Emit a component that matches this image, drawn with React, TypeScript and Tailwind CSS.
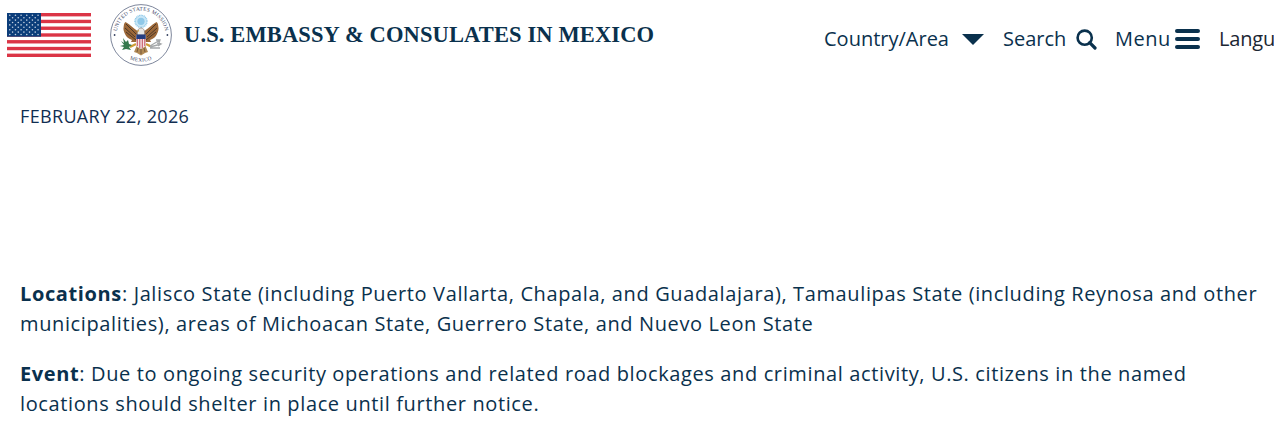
const stripes = [0, 2, 4, 6, 8, 10, 12];
const starRows = [0, 1, 2, 3, 4, 5, 6, 7, 8];

const Flag = () => (
  <svg viewBox="0 0 84 44" className="h-11 w-[84px] shrink-0" aria-label="U.S. flag">
    <rect width="84" height="44" fill="#fff" />
    {stripes.map((i) => (
      <rect key={i} y={i * 3.385} width="84" height="3.385" fill="#db3546" />
    ))}
    <rect width="34" height="23.7" fill="#0b3d7a" />
    {starRows.map((row) =>
      Array.from({ length: row % 2 ? 5 : 6 }, (_, col) => (
        <circle
          key={`${row}-${col}`}
          cx={(row % 2 ? 5.6 : 2.8) + col * 5.65}
          cy={2.3 + row * 2.4}
          r="0.8"
          fill="#c3d0e0"
        />
      ))
    )}
  </svg>
);

const Seal = () => (
  <svg viewBox="0 0 62 62" className="size-[62px] shrink-0" aria-label="United States Mission Mexico">
    <defs>
      <path id="sealTop" d="M7.5 37.5A24.4 24.4 0 1 1 54.5 37.5" />
      <path id="sealBottom" d="M12 49.8A26.8 26.8 0 0 0 50 49.8" />
    </defs>
    <circle cx="31" cy="31" r="30.4" fill="#fff" stroke="#6e7890" strokeWidth="0.9" />
    <g fill="#35405f" fontFamily="Liberation Serif, serif" fontSize="5.3" textAnchor="middle">
      <text letterSpacing="0.3">
        <textPath href="#sealTop" startOffset="50%">UNITED STATES MISSION</textPath>
      </text>
      <text letterSpacing="0.35">
        <textPath href="#sealBottom" startOffset="50%">MEXICO</textPath>
      </text>
    </g>
    <circle cx="4.6" cy="31" r="0.9" fill="#35405f" />
    <circle cx="57.4" cy="31" r="0.9" fill="#35405f" />
    {/* glory above the eagle */}
    <circle cx="31" cy="17.3" r="6" fill="#c9e6f6" stroke="#8fc9e9" strokeWidth="1.4" strokeDasharray="1 0.6" />
    <circle cx="31" cy="17.3" r="3.6" fill="#8fc8e8" />
    {/* wings */}
    <path
      d="M28 27C25 26 21 21 15.5 18C13.8 19 14 21 13.6 23C13 25 14 28 15 30C16 33 19 35 22 36L21 38L26 38L29 36Z"
      fill="#9b6738"
    />
    <path
      d="M34 27C37 26 41 21 46.5 18C48.2 19 48 21 48.4 23C49 25 48 28 47 30C46 33 43 35 40 36L41 38L36 38L33 36Z"
      fill="#9b6738"
    />
    <path
      d="M16 20L26 30M15 24L25 33M16 28L26 36M46 20L36 30M47 24L37 33M46 28L36 36"
      stroke="#4c3829"
      strokeWidth="1"
      fill="none"
    />
    {/* tail and legs */}
    <path d="M27 41L24 48L27 49L31 51.5L35 49L38 48L35 41Z" fill="#b28a55" />
    <path d="M28 44L27 48M31 44V50M34 44L35 48" stroke="#5d4330" strokeWidth="0.7" />
    <path d="M26 40L20 43M36 40L42 43" stroke="#ce9d35" strokeWidth="2.2" />
    <path d="M27.5 31C27 27 28 24 31 24C34 24 35 27 34.5 31Z" fill="#e8e6e3" stroke="#7d7169" strokeWidth="0.6" />
    <path d="M28.8 26L26.5 27.3L29 27.6Z" fill="#d69b28" />
    {/* olive branch */}
    <path d="M11 37L14 39L13 34L16 38L18 36L19 40L22 41L19 43L21 46L16 45L12 46L14 43L10 42L14 41Z" fill="#34794c" />
    {/* arrows */}
    <path
      d="M40 42L50 36M40 43L51 40M40 44L50 44M46 36L50 36L49 39M47 39L51 40L48 42"
      stroke="#a5a8aa"
      strokeWidth="1.3"
      fill="none"
    />
    {/* shield */}
    <path d="M26.3 31H35.7V40C35.7 43 33 44 31 45C29 44 26.3 43 26.3 40Z" fill="#f3e7e9" />
    <path d="M27.3 35V42M29.8 35V44M32.3 35V44M34.8 35V42" stroke="#c85566" strokeWidth="1.1" />
    <path d="M26.3 30.5H35.7V35H26.3Z" fill="#243d80" />
  </svg>
);

const App = () => {
  return (
    <div className="min-h-[436px] w-full overflow-hidden bg-white font-['Open_Sans',sans-serif] text-[#0a314d]">
      <header className="flex h-[78px] items-start pl-[7px]">
        <div className="pt-[13px]">
          <Flag />
        </div>
        <div className="ml-[19px] pt-1">
          <Seal />
        </div>
        <h1 className="ml-3 w-[640px] shrink-0 pt-[19px] font-['Liberation_Serif',serif] text-[22.5px] leading-[32px] font-bold tracking-[0.13px] whitespace-nowrap">
          U.S. EMBASSY &amp; CONSULATES IN MEXICO
        </h1>
        <nav className="flex h-[78px] shrink-0 items-center text-[20px] whitespace-nowrap">
          <div className="flex w-[179px] items-center">
            <span className="w-[138px]">Country/Area</span>
            <svg viewBox="0 0 22 11" className="h-[11px] w-[22px]">
              <path d="M0 0H22L11 11Z" fill="currentColor" />
            </svg>
          </div>
          <div className="flex w-28 items-center">
            <span className="w-[73px]">Search</span>
            <svg viewBox="0 0 21 21" className="size-[21px]" fill="none" stroke="currentColor">
              <circle cx="8.7" cy="8.7" r="7.1" strokeWidth="2.6" />
              <path d="M13.7 13.7L19 19" strokeWidth="3.2" strokeLinecap="round" />
            </svg>
          </div>
          <div className="flex w-[104px] items-center">
            <span className="w-[60px] tracking-[0.5px]">Menu</span>
            <span className="flex w-[25px] flex-col gap-1">
              <span className="h-1 rounded-full bg-current" />
              <span className="h-1 rounded-full bg-current" />
              <span className="h-1 rounded-full bg-current" />
            </span>
          </div>
          <span className="tracking-[-0.2px] text-[#1b2733]">Langu</span>
        </nav>
      </header>

      <main className="px-5">
        <p className="pt-[25px] text-[18px] leading-[27px] tracking-[0.34px] text-[#112e51]">FEBRUARY 22, 2026</p>
        <div className="mt-[149px] text-[20px] leading-[30px] tracking-[0.625px] whitespace-nowrap">
          <p>
            <strong>Locations</strong>: Jalisco State (including Puerto Vallarta, Chapala, and Guadalajara), Tamaulipas
            State (including Reynosa and other
            <br />
            municipalities), areas of Michoacan State, Guerrero State, and Nuevo Leon State
          </p>
          <p className="mt-5">
            <strong>Event</strong>: Due to ongoing security operations and related road blockages and criminal activity,
            U.S. citizens in the named
            <br />
            locations should shelter in place until further notice.
          </p>
        </div>
      </main>
    </div>
  );
};

export default App;
